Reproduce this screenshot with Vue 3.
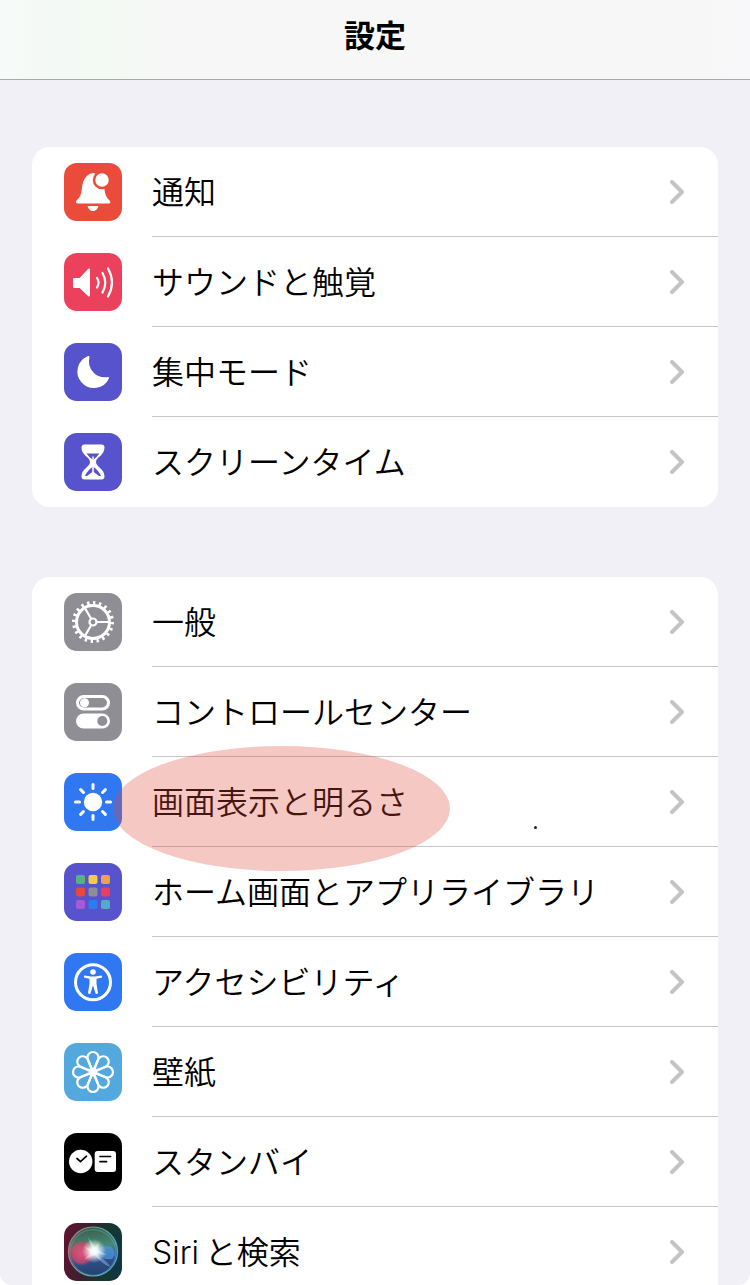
<template>
  <div class="settings">
    <header class="navbar">
      <h1>設定</h1>
    </header>

    <main class="content">
      <nav
        v-for="(group, gi) in groups"
        :key="gi"
        class="group"
        :class="{ continues: gi === groups.length - 1 }"
      >
        <a
          v-for="item in group"
          :key="item.icon"
          href="#"
          class="row"
          @click.prevent="selected = item.icon"
        >
          <span class="icon" :class="item.icon">
            <svg viewBox="0 0 58 58" aria-hidden="true">
              <g v-if="item.icon === 'bell'">
                <path class="fill" d="M14 40.5Q11 40.5 12.500 37.500C17 33.500 17 31 18 24.500C19 16 23 11.500 27 10.500Q29 9.500 31 10.500L40 23C41 31 41.500 33.500 45.500 37.500Q47.500 40.500 44.500 40.500Z" />
                <path class="fill" d="M23.500 43H34.500Q33 48 29 48T23.500 43Z" />
                <circle class="badge" cx="38" cy="17" r="8" />
              </g>
              <g v-else-if="item.icon === 'sound'">
                <path class="fill round" d="M10 26H16L25 16.500V42.500L16 34H10Z" />
                <path class="line" d="M33 25Q36 29.500 33 34.500M38.500 20Q44 29.500 38.500 39.500M44 15.500Q52 29.500 44 43.500" />
              </g>
              <path
                v-else-if="item.icon === 'moon'"
                class="fill round"
                d="M24.500 14A15.500 15.500 0 1 0 44 35A17 17 0 0 1 24.500 14Z"
              />
              <g v-else-if="item.icon === 'hourglass'">
                <path class="fill" d="M20.500 11.500H37.500Q40.500 11.500 40.500 14.500C40.500 22.500 32 24 32 29S40.500 35.500 40.500 43.500Q40.500 46.500 37.500 46.500H20.500Q17.500 46.500 17.500 43.500C17.500 35.500 26 34 26 29S17.500 22.500 17.500 14.500Q17.500 11.500 20.500 11.500Z" />
                <path class="cut" d="M22.500 20.500H35.500Q33 24 29 27Q25 24 22.500 20.500ZM29 33.500Q35 38 37 43H35L29 38.500L23 43H21Q23 38 29 33.500Z" />
                <path class="thin" d="M29 24V40" />
              </g>
              <g v-else-if="item.icon === 'gear'" class="line">
                <circle class="ring" cx="29" cy="29" r="16.500" />
                <circle class="teeth" cx="29" cy="29" r="19" pathLength="40" />
                <circle cx="29" cy="29" r="3.500" />
                <path d="M33 29H45M27 25.500L21 15.200M27 32.500L21 42.800" />
              </g>
              <g v-else-if="item.icon === 'control'">
                <rect class="line wide" x="13.500" y="13.500" width="31" height="12.500" rx="6.250" />
                <circle class="fill" cx="20.500" cy="19.800" r="4.500" />
                <rect class="fill" x="12" y="30.500" width="34" height="15" rx="7.500" />
                <circle class="cut" cx="38.300" cy="38" r="5" />
              </g>
              <g v-else-if="item.icon === 'sun'">
                <circle class="fill" cx="29" cy="29" r="9.200" />
                <path
                  v-for="n in 8"
                  :key="n"
                  class="line wide"
                  d="M29 11.500V15.500"
                  :transform="`rotate(${n * 45} 29 29)`"
                />
              </g>
              <g v-else-if="item.icon === 'home'">
                <rect
                  v-for="(color, i) in tiles"
                  :key="i"
                  :x="12 + (i % 3) * 12.5"
                  :y="12 + Math.floor(i / 3) * 12.5"
                  width="9"
                  height="9"
                  rx="2"
                  :fill="color"
                />
              </g>
              <g v-else-if="item.icon === 'access'">
                <circle class="line wide" cx="29" cy="29.200" r="17.500" />
                <circle class="fill" cx="29" cy="19" r="2.800" />
                <path class="fill" d="M20.500 22.500L27 23.400H31L37.500 22.500Q39 23.700 37.500 24.700L32.500 25.700V30.500L34 40Q33 41.800 31.500 40.500L29.300 33H28.700L26.500 40.500Q25 41.800 24 40L25.500 30.500V25.700L20.500 24.700Q19 23.700 20.500 22.500Z" />
              </g>
              <g v-else-if="item.icon === 'flower'" class="line">
                <path
                  v-for="n in 8"
                  :key="n"
                  d="M29 27.500C27 23 23.500 18.500 23.500 14.500A5.500 5.500 0 0 1 34.500 14.500C34.500 18.500 31 23 29 27.500Z"
                  :transform="`rotate(${n * 45} 29 29)`"
                />
                <circle cx="29" cy="29" r="2.500" />
              </g>
              <g v-else-if="item.icon === 'standby'">
                <circle class="fill" cx="16.700" cy="28.500" r="11.700" />
                <rect class="fill" x="30.700" y="18" width="21.300" height="21" rx="3" />
                <path class="ink" d="M13 25.500L16.500 28.700L22.500 23.200M36 23.500H46.500M36 28.700H42.500" />
              </g>
              <g v-else>
                <defs>
                  <radialGradient id="flare">
                    <stop offset="0" stop-color="#fff" />
                    <stop offset="0.3" stop-color="#fff" stop-opacity="0.9" />
                    <stop offset="1" stop-color="#fff" stop-opacity="0" />
                  </radialGradient>
                  <linearGradient id="orb" x1="0.400" y1="0" x2="0.500" y2="1">
                    <stop offset="0" stop-color="#3b5a4e" />
                    <stop offset="0.4" stop-color="#458a74" />
                    <stop offset="0.6" stop-color="#2f5591" />
                    <stop offset="1" stop-color="#24406f" />
                  </linearGradient>
                  <linearGradient id="rim" x1="0" y1="0" x2="1" y2="0.3">
                    <stop offset="0" stop-color="#c96a86" />
                    <stop offset="0.5" stop-color="#5fb092" />
                    <stop offset="1" stop-color="#5aa5cf" />
                  </linearGradient>
                  <radialGradient id="pink">
                    <stop offset="0" stop-color="#e4507c" />
                    <stop offset="0.75" stop-color="#cf4668" stop-opacity="0.8" />
                    <stop offset="1" stop-color="#b23b5e" stop-opacity="0" />
                  </radialGradient>
                </defs>
                <circle cx="29" cy="28.500" r="24.500" fill="url(#orb)" stroke="url(#rim)" stroke-width="1.200" />
                <circle cx="29" cy="29.500" r="22.800" fill="none" stroke="url(#rim)" stroke-width="0.600" />
                <circle cx="17.500" cy="30" r="13" fill="url(#pink)" />
                <path d="M31 29Q39 20 48 24Q54 31 48 36Q40 38 31 29Z" fill="#4f93d8" opacity="0.75" />
                <path d="M30 29Q37 42 47 44Q39 34 30 29Z" fill="#8fb4ec" opacity="0.5" />
                <circle cx="30" cy="28" r="12" fill="url(#flare)" />
                <path d="M24 14L31 24L35 20L34 27L43 32L33 31L37 38L30 32L20 37L27 29L20 24L28 26Z" fill="#fff" opacity="0.35" />
              </g>
            </svg>
          </span>
          <span class="label">
            <span class="text">{{ item.label }}</span>
            <svg class="chevron" viewBox="0 0 14 24" aria-hidden="true">
              <path d="M2 2L12 12L2 22" />
            </svg>
          </span>
          <template v-if="item.marked">
            <span class="marker"></span>
            <span class="dot"></span>
          </template>
        </a>
      </nav>
    </main>
  </div>
</template>

<script setup>
import { ref } from 'vue';

const selected = ref('');

const groups = [
  [
    { icon: 'bell', label: '通知' },
    { icon: 'sound', label: 'サウンドと触覚' },
    { icon: 'moon', label: '集中モード' },
    { icon: 'hourglass', label: 'スクリーンタイム' }
  ],
  [
    { icon: 'gear', label: '一般' },
    { icon: 'control', label: 'コントロールセンター' },
    { icon: 'sun', label: '画面表示と明るさ', marked: true },
    { icon: 'home', label: 'ホーム画面とアプリライブラリ' },
    { icon: 'access', label: 'アクセシビリティ' },
    { icon: 'flower', label: '壁紙' },
    { icon: 'standby', label: 'スタンバイ' },
    { icon: 'siri', label: 'Siri\u2009と検索' }
  ]
];

const tiles = [
  '#5bb07f', '#f2cc4d', '#efa04a',
  '#e8473a', '#8f8e96', '#e8405a',
  '#a55bd8', '#2f7bf0', '#53aacb'
];
</script>

<style>
body {
  margin: 0;
  background: #fff;
}
</style>

<style scoped>
.settings {
  height: 100vh;
  overflow: hidden;
  background: #f2f0f7;
  border-radius: 0 0 12px 12px;
  font-family: Inter, "Noto Sans CJK JP", sans-serif;
  color: #000;
}
.navbar {
  box-sizing: border-box;
  height: 80px;
  padding-bottom: 8px;
  display: flex;
  align-items: center;
  justify-content: center;
  background: linear-gradient(90deg, #f7faf9 0, #f3f9f4 8%, #f4f9f4 15%, #f7f7f7 24%, #f7f7f7 90%, #f8f8fa 100%);
  border-bottom: 1px solid #a9a9ab;
}
h1 {
  margin: 0;
  font-size: 31px;
  line-height: 40px;
  font-weight: 700;
}
.content {
  padding: 67px 32px 0;
  display: flex;
  flex-direction: column;
  gap: 70px;
}
.group {
  background: #fff;
  border-radius: 18px;
}
.group.continues {
  border-radius: 18px 18px 0 0;
}
.row {
  position: relative;
  display: flex;
  align-items: center;
  gap: 30px;
  height: 90px;
  padding-left: 32px;
  color: inherit;
  text-decoration: none;
}
.label {
  box-sizing: border-box;
  flex: 1;
  height: 100%;
  padding-right: 34px;
  display: flex;
  align-items: center;
  justify-content: space-between;
  border-bottom: 1px solid #c6c6c8;
}
.row:last-child .label {
  border-bottom-color: transparent;
}
.text {
  padding-top: 3px;
  font-size: 32px;
  line-height: 48px;
  font-weight: 350;
  white-space: nowrap;
}
.chevron {
  width: 14px;
  height: 24px;
  fill: none;
  stroke: #c4c4c6;
  stroke-width: 4;
  stroke-linecap: round;
  stroke-linejoin: round;
}
.icon {
  --bg: #5653cc;
  width: 58px;
  height: 58px;
  border-radius: 13px;
  overflow: hidden;
  background: var(--bg);
}
.icon svg {
  display: block;
  width: 100%;
  height: 100%;
}
.icon.bell {
  --bg: #ea4b3a;
}
.icon.sound {
  --bg: #eb415c;
}
.icon.gear,
.icon.control {
  --bg: #8f8e95;
}
.icon.sun,
.icon.access {
  --bg: #3078f2;
}
.icon.flower {
  --bg: #53a8dd;
}
.icon.standby {
  --bg: #000;
}
.icon.siri {
  background: linear-gradient(100deg, #5c1530 5%, #3a2030 40%, #14382f 70%, #12344a 100%);
}
.fill {
  fill: #fff;
}
.round {
  stroke: #fff;
  stroke-width: 2;
  stroke-linejoin: round;
}
.line,
.thin,
.ink {
  fill: none;
  stroke: #fff;
  stroke-width: 2.2;
  stroke-linecap: round;
}
.wide,
.ring {
  stroke-width: 3;
}
.thin {
  stroke-width: 1.5;
}
.ink {
  stroke: #000;
  stroke-width: 1.7;
}
.cut {
  fill: var(--bg);
}
.badge {
  fill: #fff;
  stroke: var(--bg);
  stroke-width: 2.5;
}
.teeth {
  stroke-width: 4;
  stroke-linecap: butt;
  stroke-dasharray: 0.8 1.2;
}
.marker {
  position: absolute;
  top: -11px;
  left: 81px;
  width: 337px;
  height: 125px;
  border-radius: 50%;
  background: rgba(225, 72, 60, 0.3);
}
.dot {
  position: absolute;
  top: 69px;
  left: 502px;
  width: 3px;
  height: 3px;
  border-radius: 50%;
  background: #222;
}
</style>
